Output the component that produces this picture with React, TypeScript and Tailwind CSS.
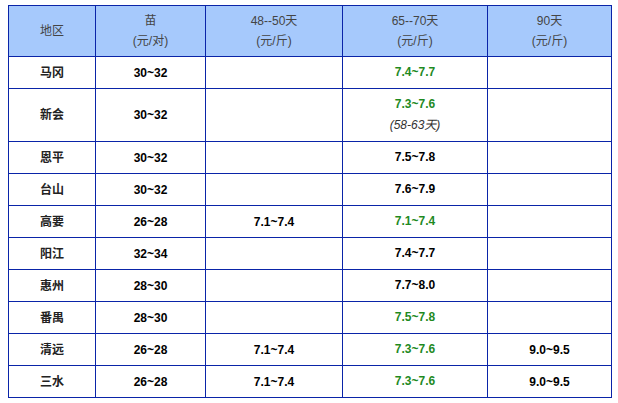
const GREEN = "text-[#1f8a1f]";

type Row = {
  area: string;
  seed: string;
  d48?: string;
  d65: string;
  d65Green?: boolean;
  d65Note?: string;
  d90?: string;
  tall?: boolean;
};

const ROWS: Row[] = [
  { area: "马冈", seed: "30~32", d65: "7.4~7.7", d65Green: true },
  { area: "新会", seed: "30~32", d65: "7.3~7.6", d65Green: true, d65Note: "(58-63天)", tall: true },
  { area: "恩平", seed: "30~32", d65: "7.5~7.8" },
  { area: "台山", seed: "30~32", d65: "7.6~7.9" },
  { area: "高要", seed: "26~28", d48: "7.1~7.4", d65: "7.1~7.4", d65Green: true },
  { area: "阳江", seed: "32~34", d65: "7.4~7.7" },
  { area: "惠州", seed: "28~30", d65: "7.7~8.0" },
  { area: "番禺", seed: "28~30", d65: "7.5~7.8", d65Green: true },
  { area: "清远", seed: "26~28", d48: "7.1~7.4", d65: "7.3~7.6", d65Green: true, d90: "9.0~9.5" },
  { area: "三水", seed: "26~28", d48: "7.1~7.4", d65: "7.3~7.6", d65Green: true, d90: "9.0~9.5" },
];

const cell = "border border-[#0a24a8] text-center align-middle p-0";

function App() {
  return (
    <div className="w-[618px] h-[403px] bg-white pt-[5px] pl-[8px] font-['Liberation_Sans','Noto_Sans_CJK_SC',sans-serif] text-[12px]">
      <table className="border-collapse table-fixed w-[603px]">
        <colgroup>
          <col className="w-[87px]" />
          <col className="w-[110px]" />
          <col className="w-[137px]" />
          <col className="w-[145px]" />
          <col className="w-[124px]" />
        </colgroup>
        <thead>
          <tr className="h-[51px] bg-[#a6c9fc] text-[#444] leading-[20px]">
            <th className={`${cell} font-normal`}>地区</th>
            <th className={`${cell} font-normal`}>
              苗<br />(元/对)
            </th>
            <th className={`${cell} font-normal`}>
              48--50天<br />(元/斤)
            </th>
            <th className={`${cell} font-normal`}>
              65--70天<br />(元/斤)
            </th>
            <th className={`${cell} font-normal`}>
              90天<br />(元/斤)
            </th>
          </tr>
        </thead>
        <tbody>
          {ROWS.map((r) => (
            <tr key={r.area} className={r.tall ? "h-[53px]" : "h-[32px]"}>
              <td className={`${cell} font-bold text-[#222]`}>{r.area}</td>
              <td className={`${cell} font-bold text-black`}>{r.seed}</td>
              <td className={`${cell} font-bold text-black`}>{r.d48 ?? ""}</td>
              <td className={`${cell} leading-[21px]`}>
                <span className={`font-bold ${r.d65Green ? GREEN : "text-black"}`}>{r.d65}</span>
                {r.d65Note && (
                  <>
                    <br />
                    <span className="italic text-[#333]">{r.d65Note}</span>
                  </>
                )}
              </td>
              <td className={`${cell} font-bold text-black`}>{r.d90 ?? ""}</td>
            </tr>
          ))}
        </tbody>
      </table>
    </div>
  );
}

export default App;
